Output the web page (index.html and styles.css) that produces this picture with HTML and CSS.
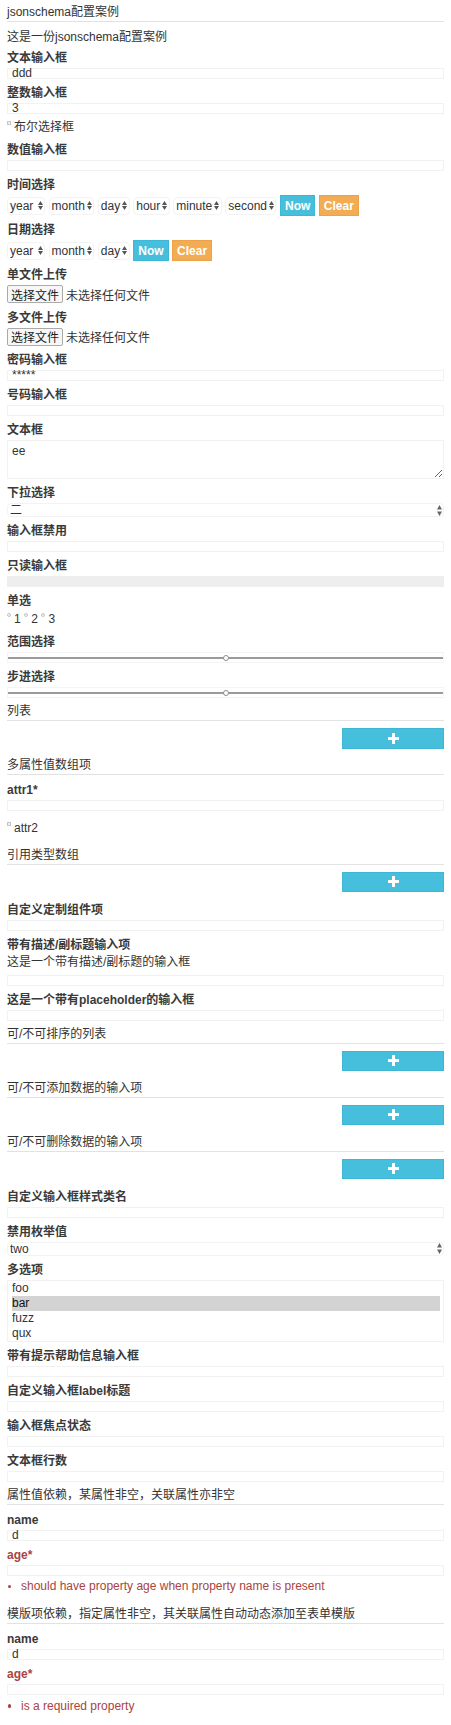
FILE: index.html
```html
<!DOCTYPE html>
<html lang="zh-CN">
<head>
<meta charset="utf-8">
<title>jsonschema配置案例</title>
<link rel="stylesheet" href="styles.css">
</head>
<body>
<svg class="sprite" aria-hidden="true">
  <symbol id="arr-s" viewBox="0 0 5 9"><path d="M0 4L2.5 0L5 4Z M0 5L2.5 9L5 5Z"/></symbol>
  <symbol id="arr-l" viewBox="0 0 5 11"><path d="M0 4.5L2.5 0L5 4.5Z M0 6.5L2.5 11L5 6.5Z"/></symbol>
  <symbol id="plus" viewBox="0 0 11 11"><path d="M5.5 0v11M0 5.5h11" stroke="#fff" stroke-width="3" fill="none"/></symbol>
</svg>
<div class="form">
  <div class="legend">jsonschema配置案例</div>
  <p class="desc">这是一份jsonschema配置案例</p>

  <div class="group"><div class="label">文本输入框</div><div class="input">ddd</div></div>
  <div class="group"><div class="label">整数输入框</div><div class="input">3</div></div>
  <div class="check-row"><span class="check-box"></span><span>布尔选择框</span></div>
  <div class="group"><div class="label">数值输入框</div><div class="input"></div></div>

  <div class="group"><div class="label">时间选择</div>
    <div class="dt-row">
      <span class="mini-select year">year<svg class="arr-s"><use href="#arr-s"/></svg></span>
      <span class="mini-select">month<svg class="arr-s"><use href="#arr-s"/></svg></span>
      <span class="mini-select">day<svg class="arr-s"><use href="#arr-s"/></svg></span>
      <span class="mini-select">hour<svg class="arr-s"><use href="#arr-s"/></svg></span>
      <span class="mini-select">minute<svg class="arr-s"><use href="#arr-s"/></svg></span>
      <span class="mini-select">second<svg class="arr-s"><use href="#arr-s"/></svg></span>
      <span class="btn btn-now">Now</span>
      <span class="btn btn-clear">Clear</span>
    </div>
  </div>
  <div class="group"><div class="label">日期选择</div>
    <div class="dt-row">
      <span class="mini-select year">year<svg class="arr-s"><use href="#arr-s"/></svg></span>
      <span class="mini-select">month<svg class="arr-s"><use href="#arr-s"/></svg></span>
      <span class="mini-select">day<svg class="arr-s"><use href="#arr-s"/></svg></span>
      <span class="btn btn-now">Now</span>
      <span class="btn btn-clear">Clear</span>
    </div>
  </div>

  <div class="group file"><div class="label">单文件上传</div>
    <div class="file-row"><span class="file-btn">选择文件</span><span class="file-note">未选择任何文件</span></div>
  </div>
  <div class="group file"><div class="label">多文件上传</div>
    <div class="file-row"><span class="file-btn">选择文件</span><span class="file-note">未选择任何文件</span></div>
  </div>

  <div class="group"><div class="label">密码输入框</div><div class="input">*****</div></div>
  <div class="group"><div class="label">号码输入框</div><div class="input"></div></div>
  <div class="group"><div class="label">文本框</div><textarea class="textarea">ee</textarea></div>
  <div class="group"><div class="label">下拉选择</div>
    <div class="select"><span>二</span><svg class="arr-l"><use href="#arr-l"/></svg></div>
  </div>
  <div class="group"><div class="label">输入框禁用</div><div class="input"></div></div>
  <div class="group"><div class="label">只读输入框</div><div class="input readonly"></div></div>

  <div class="label">单选</div>
  <div class="radio-row">
    <span class="radio"><span class="radio-dot"></span>1</span>
    <span class="radio"><span class="radio-dot"></span>2</span>
    <span class="radio"><span class="radio-dot"></span>3</span>
  </div>

  <div class="group"><div class="label">范围选择</div><div class="range"><span class="thumb"></span></div></div>
  <div class="group"><div class="label">步进选择</div><div class="range"><span class="thumb"></span></div></div>

  <div class="fieldset">
    <div class="legend">列表</div>
    <div class="add-row"><span class="btn-add"><svg><use href="#plus"/></svg></span></div>
  </div>

  <div class="fieldset">
    <div class="legend">多属性值数组项</div>
    <div class="obj">
      <div class="group wide"><div class="label">attr1*</div><div class="input"></div></div>
      <div class="check-row nested"><span class="check-box"></span><span>attr2</span></div>
    </div>
  </div>

  <div class="fieldset">
    <div class="legend">引用类型数组</div>
    <div class="add-row"><span class="btn-add"><svg><use href="#plus"/></svg></span></div>
  </div>

  <div class="group"><div class="label">自定义定制组件项</div><div class="input"></div></div>
  <div class="group"><div class="label">带有描述/副标题输入项</div>
    <div class="field-desc">这是一个带有描述/副标题的输入框</div>
    <div class="input"></div>
  </div>
  <div class="group"><div class="label">这是一个带有placeholder的输入框</div><div class="input"></div></div>

  <div class="fieldset">
    <div class="legend">可/不可排序的列表</div>
    <div class="add-row"><span class="btn-add"><svg><use href="#plus"/></svg></span></div>
  </div>
  <div class="fieldset">
    <div class="legend">可/不可添加数据的输入项</div>
    <div class="add-row"><span class="btn-add"><svg><use href="#plus"/></svg></span></div>
  </div>
  <div class="fieldset">
    <div class="legend">可/不可删除数据的输入项</div>
    <div class="add-row"><span class="btn-add"><svg><use href="#plus"/></svg></span></div>
  </div>

  <div class="group"><div class="label">自定义输入框样式类名</div><div class="input"></div></div>
  <div class="group"><div class="label">禁用枚举值</div>
    <div class="select"><span>two</span><svg class="arr-l"><use href="#arr-l"/></svg></div>
  </div>
  <div class="group"><div class="label">多选项</div>
    <div class="listbox">
      <div class="opt">foo</div>
      <div class="opt selected">bar</div>
      <div class="opt">fuzz</div>
      <div class="opt">qux</div>
    </div>
  </div>
  <div class="group"><div class="label">带有提示帮助信息输入框</div><div class="input"></div></div>
  <div class="group"><div class="label">自定义输入框label标题</div><div class="input"></div></div>
  <div class="group"><div class="label">输入框焦点状态</div><div class="input"></div></div>
  <div class="group"><div class="label">文本框行数</div><div class="input"></div></div>

  <div class="fieldset dep">
    <div class="legend">属性值依赖，某属性非空，关联属性亦非空</div>
    <div class="obj">
      <div class="group"><div class="label">name</div><div class="input">d</div></div>
      <div class="label error">age*</div>
      <div class="input"></div>
      <ul class="errors"><li>should have property age when property name is present</li></ul>
    </div>
  </div>

  <div class="fieldset dep">
    <div class="legend">模版项依赖，指定属性非空，其关联属性自动动态添加至表单模版</div>
    <div class="obj">
      <div class="group"><div class="label">name</div><div class="input">d</div></div>
      <div class="label error">age*</div>
      <div class="input"></div>
      <ul class="errors"><li>is a required property</li></ul>
    </div>
  </div>
</div>
</body>
</html>
```

FILE: styles.css
```css
* { box-sizing: border-box; }
html, body { margin: 0; background: #fff; }
body {
  padding: 4px 7px 10px;
  font-family: "Liberation Sans", "Noto Sans CJK SC", sans-serif;
  font-size: 12px;
  color: #333;
}
.sprite { display: block; width: 0; height: 0; overflow: hidden; }

.legend { line-height: 17px; border-bottom: 1px solid #e2e2e2; }
.desc { margin: 6px 0 3px; line-height: 18px; }

.group { margin-bottom: 5px; }
.group.file { margin-bottom: 5.5px; }
.group.wide { margin-bottom: 8.5px; }

.label { line-height: 18px; margin-bottom: 1px; font-weight: bold; color: #3a3a3a; }
.label.error { color: #a94442; }

.input {
  height: 11px;
  line-height: 9px;
  padding: 0 4px;
  border: 1px solid #f2f2f2;
  white-space: nowrap;
}
.input.readonly { background: #eee; border-color: #eee; }

.check-row { display: flex; align-items: flex-start; line-height: 17px; margin-bottom: 5px; }
.check-row.nested { margin-bottom: 10px; }
.check-box {
  flex: none;
  width: 4px; height: 4px;
  margin: 2px 3px 0 0;
  border: 1px solid #c6c6c6;
  background: #f0f0f0;
}

.dt-row { display: flex; align-items: center; gap: 3.5px; height: 21px; }
.mini-select {
  display: flex; align-items: center;
  height: 18px;
  padding: 0 1.5px 0 2px;
  border: 1px solid #f3f3f3;
  border-radius: 4px;
  line-height: 16px;
}
.mini-select.year { min-width: 38px; justify-content: space-between; }
.arr-s { flex: none; width: 5px; height: 9px; margin-left: 2px; fill: #555; }

.btn {
  display: flex; align-items: center;
  height: 21px;
  padding: 0 4px;
  color: #fff;
  font-weight: bold;
  border: 1px solid;
}
.btn-now { background: #46bfdd; border-color: #3fb6d6; }
.btn-clear { background: #f2ac54; border-color: #eda24a; }

.file-row { display: flex; align-items: center; height: 18px; }
.file-btn {
  display: flex; align-items: center;
  height: 18px;
  padding: 0 3px;
  border: 1px solid #aaa;
  border-radius: 2px;
  background: #f7f7f7;
  color: #222;
}
.file-note { margin-left: 3px; }

.textarea {
  display: block;
  width: 100%;
  height: 39px;
  margin: 0;
  padding: 3px 4px;
  border: 1px solid #f2f2f2;
  border-radius: 0;
  font: inherit;
  line-height: 15px;
  color: #333;
  resize: vertical;
}

.select {
  display: flex; align-items: center; justify-content: space-between;
  height: 14px;
  padding: 0 1px 0 2px;
  border: 1px solid #f3f3f3;
  border-radius: 4px;
  line-height: 12px;
}
.arr-l { flex: none; width: 5px; height: 11px; fill: #666; }

.radio-row { display: flex; line-height: 17px; margin: 1px 0 5px; }
.radio { display: flex; align-items: flex-start; margin-right: 3.5px; }
.radio-dot {
  flex: none;
  width: 4px; height: 4px;
  margin: 1.5px 3px 0 0;
  border: 1px solid #c6c6c6;
  border-radius: 50%;
  background: #f0f0f0;
}

.range {
  display: flex; align-items: center; justify-content: center;
  height: 11px;
  border: 1px solid #f4f4f4;
  background: linear-gradient(#9a9a9a, #9a9a9a) center / 100% 2px no-repeat;
}
.thumb {
  width: 6px; height: 6px;
  border: 1px solid #8f8f8f;
  border-radius: 50%;
  background: #fff;
}

.add-row { display: flex; justify-content: flex-end; margin: 7px 0 8.5px; }
.btn-add {
  display: flex; align-items: center; justify-content: center;
  width: 102px;
  height: 20.5px;
  background: #46bfdd;
  border: 1px solid #3fb6d6;
}
.btn-add svg { width: 11px; height: 11px; }

.obj { padding-top: 6px; }

.field-desc { line-height: 17px; margin: -1px 0 4px; }

.listbox { border: 1px solid #f2f2f2; padding: 0 3px 0 4px; }
.opt { line-height: 15px; }
.opt.selected { background: #d3d3d3; color: #111; }

.dep { margin-bottom: 11px; }
.dep:last-child { margin-bottom: 0; }
.errors { list-style: none; margin: 2.5px 0 0; padding: 0; color: #a94442; }
.errors li { display: flex; align-items: center; line-height: 17px; }
.errors li::before {
  content: "";
  flex: none;
  width: 3.5px; height: 3.5px;
  margin: 0 10px 0 0.5px;
  border-radius: 50%;
  background: #a94442;
}
```
